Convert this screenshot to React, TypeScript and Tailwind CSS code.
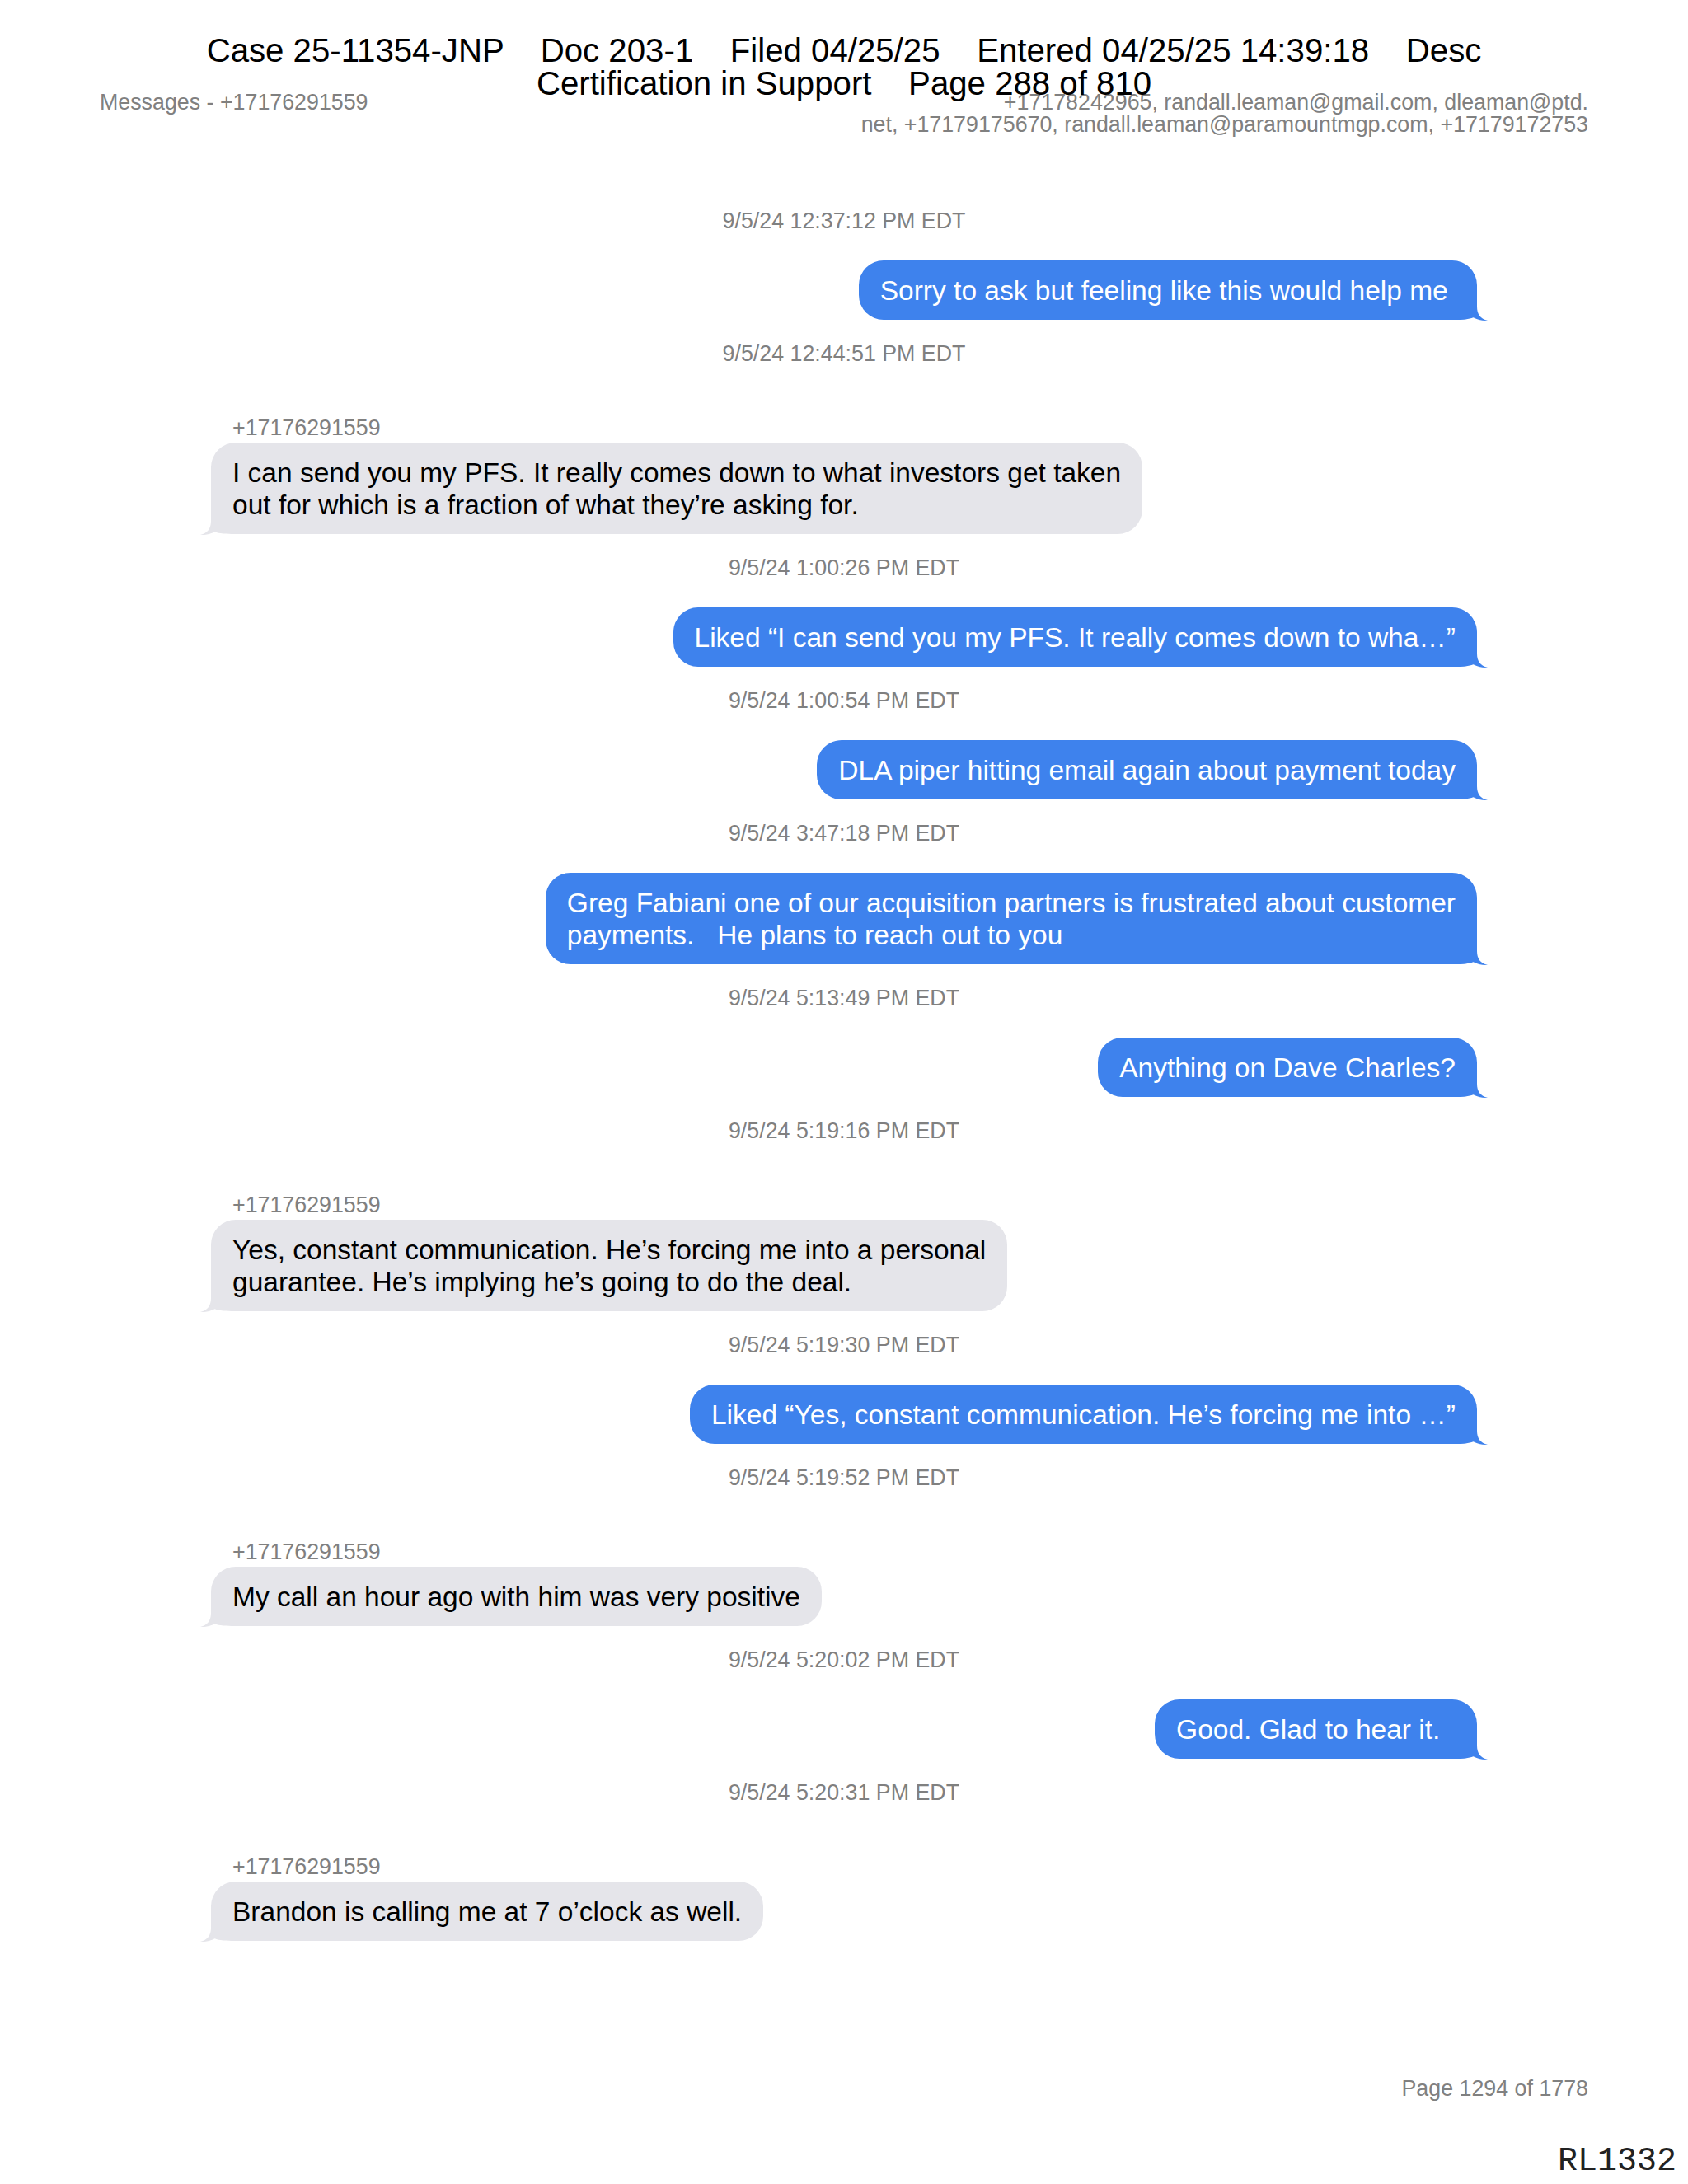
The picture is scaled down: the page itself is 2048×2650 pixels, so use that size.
import React from 'react';

type Message = {
  ts: string;
  from?: string;
  lines: string[];
};

const SENDER = '+17176291559';

const messages: Message[] = [
  { ts: '9/5/24 12:37:12 PM EDT', lines: ['Sorry to ask but feeling like this would help me '] },
  {
    ts: '9/5/24 12:44:51 PM EDT',
    from: SENDER,
    lines: [
      'I can send you my PFS. It really comes down to what investors get taken',
      'out for which is a fraction of what they’re asking for.',
    ],
  },
  { ts: '9/5/24 1:00:26 PM EDT', lines: ['Liked “I can send you my PFS. It really comes down to wha…”'] },
  { ts: '9/5/24 1:00:54 PM EDT', lines: ['DLA piper hitting email again about payment today'] },
  {
    ts: '9/5/24 3:47:18 PM EDT',
    lines: [
      'Greg Fabiani one of our acquisition partners is frustrated about customer',
      'payments.   He plans to reach out to you',
    ],
  },
  { ts: '9/5/24 5:13:49 PM EDT', lines: ['Anything on Dave Charles?'] },
  {
    ts: '9/5/24 5:19:16 PM EDT',
    from: SENDER,
    lines: [
      'Yes, constant communication. He’s forcing me into a personal',
      'guarantee. He’s implying he’s going to do the deal.',
    ],
  },
  { ts: '9/5/24 5:19:30 PM EDT', lines: ['Liked “Yes, constant communication. He’s forcing me into …”'] },
  { ts: '9/5/24 5:19:52 PM EDT', from: SENDER, lines: ['My call an hour ago with him was very positive'] },
  { ts: '9/5/24 5:20:02 PM EDT', lines: ['Good. Glad to hear it.  '] },
  { ts: '9/5/24 5:20:31 PM EDT', from: SENDER, lines: ['Brandon is calling me at 7 o’clock as well.'] },
];

// bubble tail, drawn for the bottom-right corner; mirrored for incoming messages
const TAIL = 'M0 0 H30 V23 C30 32 34 38 43 40 C36 40.4 30.5 38.8 25.5 36.3 C20 38.6 12 39 0 39 Z';

const Tail: React.FC<{ mine: boolean }> = ({ mine }) => (
  <svg
    width="43"
    height="41"
    viewBox="0 0 43 41"
    className={mine ? 'absolute right-[-13px] bottom-[-2px]' : 'absolute left-[-13px] bottom-[-2px]'}
  >
    <path d={TAIL} fill={mine ? '#3e82ed' : '#e5e5ea'} transform={mine ? undefined : 'matrix(-1 0 0 1 43 0)'} />
  </svg>
);

const Bubble: React.FC<{ msg: Message }> = ({ msg }) => {
  const mine = !msg.from;
  return (
    <div
      className={
        mine
          ? 'relative self-end rounded-[30px] bg-[#3e82ed] px-[26px] py-[16.5px] text-white'
          : 'relative self-start rounded-[30px] bg-[#e5e5ea] px-[26px] py-[16.5px] text-black'
      }
    >
      <Tail mine={mine} />
      <p className="relative whitespace-pre text-[33.5px] leading-[39px]">
        {msg.lines.map((l, i) => (
          <React.Fragment key={i}>
            {i > 0 && <br />}
            {l}
          </React.Fragment>
        ))}
      </p>
    </div>
  );
};

export default function App() {
  return (
    <div className="relative flex h-[2650px] w-[2048px] flex-col bg-white font-['Liberation_Sans',Arial,sans-serif]">
      {/* court filing stamp, printed over the page */}
      <div className="absolute inset-x-0 top-[42px] whitespace-pre text-center text-[40.2px] leading-[40px] text-black">
        <div>{'Case 25-11354-JNP    Doc 203-1    Filed 04/25/25    Entered 04/25/25 14:39:18    Desc'}</div>
        <div>{'Certification in Support    Page 288 of 810'}</div>
      </div>

      <div className="flex justify-between px-[121px] pt-[111px] text-[26.8px] leading-[27px] text-[#808080]">
        <div>Messages - +17176291559</div>
        <div className="text-right">
          +17178242965, randall.leaman@gmail.com, dleaman@ptd.
          <br />
          net, +17179175670, randall.leaman@paramountmgp.com, +17179172753
        </div>
      </div>

      <div className="mx-auto mt-[87px] flex w-[1536px] flex-col">
        {messages.map((m, i) => (
          <React.Fragment key={i}>
            <div
              className={
                i === 0
                  ? 'text-center text-[26.8px] leading-[32px] text-[#808080]'
                  : 'mt-[25px] text-center text-[26.8px] leading-[32px] text-[#808080]'
              }
            >
              {m.ts}
            </div>
            {m.from ? (
              <>
                <div className="mt-[58px] pl-[26px] text-[26.8px] leading-[32px] text-[#808080]">{m.from}</div>
                <div className="mt-[2px] flex flex-col">
                  <Bubble msg={m} />
                </div>
              </>
            ) : (
              <div className="mt-[32px] flex flex-col">
                <Bubble msg={m} />
              </div>
            )}
          </React.Fragment>
        ))}
      </div>

      <div className="flex-1" />

      <div className="flex justify-end pr-[121px] text-[26.8px] leading-[32px] text-[#808080]">Page 1294 of 1778</div>
      <div className="mt-[51px] flex justify-end pr-[14px] pb-[5px] font-['Liberation_Mono',monospace] text-[40px] leading-[44px] text-[#222]">
        RL1332
      </div>
    </div>
  );
}
